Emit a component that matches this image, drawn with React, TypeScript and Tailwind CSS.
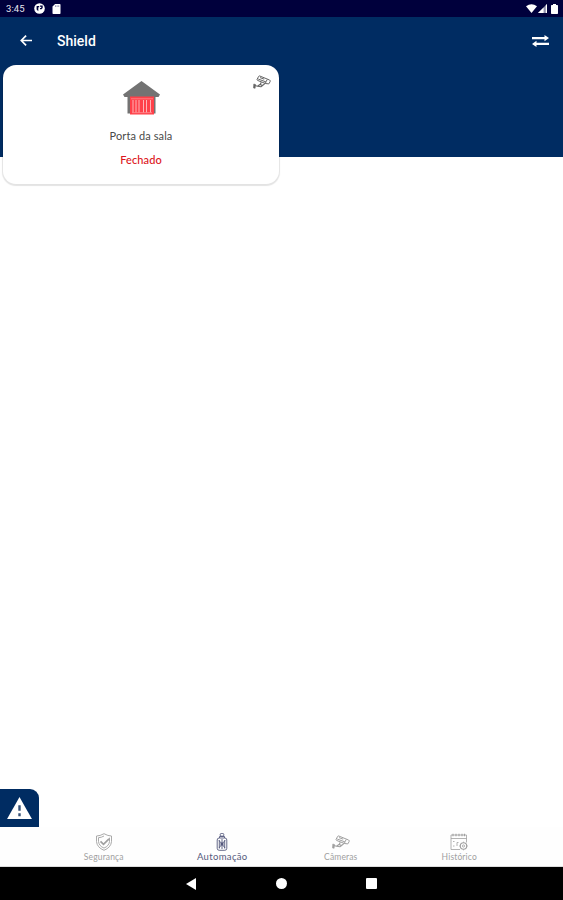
import { ReactNode } from 'react';

function StatusBar() {
  return (
    <div className="flex h-[17px] items-center justify-between bg-[#00003c] pl-[6px] pr-[5px] text-white">
      <div className="flex items-center">
        <span className="w-[28px] font-['Roboto',sans-serif] text-[9.5px] leading-none tracking-[0.1px] text-[#e4e4ec]">3:45</span>
        <svg className="h-[11px] w-[11px]" viewBox="0 0 11 11">
          <circle cx="5.5" cy="5.5" r="5.3" fill="#fff" />
          <path d="M2.600 3h2.600v1.300H4.300v4L2.600 6.500zM6 2.500h2.700v2.600L7.500 6.300H6V5h1.200V3.700H6z" fill="#00003c" />
        </svg>
        <svg className="ml-[7px] h-[10px] w-[9px]" viewBox="0 0 8 10">
          <path d="M2.6 0H7.3q.7 0 .7.7v8.6q0 .7-.7.7H.7Q0 10 0 9.300V2.600z" fill="#fff" />
          <path d="M3 1.300v1.700M4.600 1.300v1.700M6.200 1.300v1.700" stroke="#77779a" strokeWidth=".7" />
        </svg>
      </div>
      <div className="flex items-center">
        <svg className="h-[9px] w-[11px]" viewBox="0 0 11 9">
          <path d="M0 2.200Q5.500-1.600 11 2.200L5.500 9z" fill="#fff" />
        </svg>
        <svg className="ml-px h-[9px] w-[9px]" viewBox="0 0 9 9">
          <path d="M0 9L9 0v9z" fill="#8f8faa" />
          <path d="M0 9l5.600-5.600V9zM7.800 1.200L9 0v9H7.800z" fill="#fff" />
        </svg>
        <svg className="ml-[4px] h-[10px] w-[7px]" viewBox="0 0 7 10">
          <path d="M2 0h3v1h1.300q.7 0 .7.700v7.600q0 .7-.7.700H.7Q0 10 0 9.300V1.700Q0 1 .7 1H2z" fill="#fff" />
        </svg>
      </div>
    </div>
  );
}

function Header() {
  return (
    <header className="h-[140px] bg-[#002c62]">
      <div className="flex h-[47px] items-center pl-[20px] pr-[14px] text-white">
        <svg className="h-[11px] w-[12px]" viewBox="0 0 12 11" fill="none" stroke="#fff" strokeWidth="1.7">
          <path d="M12 5.500H1.200M6.100.700L1.300 5.500l4.800 4.800" />
        </svg>
        <h1 className="ml-[25px] font-['Roboto',sans-serif] text-[14px] leading-none font-medium">Shield</h1>
        <svg className="ml-auto h-[12px] w-[17px]" viewBox="0 0 17 12" fill="#fff">
          <path d="M0 1.900h12.500V0L17 3.100l-4.500 3.100V4.300H0zM17 7.700H4.500V5.800L0 8.900 4.500 12v-1.900H17z" />
        </svg>
      </div>
    </header>
  );
}

function CameraIcon() {
  return (
    <svg className="h-[14px] w-[18px]" viewBox="0 0 18 14" fill="none" stroke="currentColor" strokeLinejoin="round">
      <path d="M6.500.900L16.600 5q1 .6.500 1.700l-1.300 2.200-3.300-.4-8-3.100q-.8-.4-.3-1.300l1.200-2.200q.4-1 1.100-1z" strokeWidth="1" />
      <path d="M5.200 4l7.700 2.900 1.400-2.500M12.900 6.900l-.4 1.600M7 2.600l4.200 1.600" strokeWidth="1" />
      <path d="M8.300 7.200L7.200 9.500l2.300 1 2.700-2.100M7.300 9.300l-2.800 2-2.700-.8M4.500 11.300l3.400.4 2-1.500" strokeWidth="1.100" />
      <path d="M.8 9l1.700.5-.4 3.800-1.600-.4z" fill="currentColor" strokeWidth=".6" />
    </svg>
  );
}

function GarageIcon() {
  return (
    <svg className="h-[34px] w-[37px]" viewBox="0 0 37 34">
      <path d="M18.500 0L37 13.500 35.500 16H32.500V32.500H4.500V16H1.500L0 13.500z" fill="#737373" />
      <rect x="7" y="15.500" width="24" height="18" fill="#ff4049" />
      <path d="M8 17.800h22" stroke="#ff8b90" strokeWidth=".8" />
      <path d="M10 19v12.500M13 19v12.500M16 19v12.500M20.500 19v12.500M23.500 19v12.500M27.500 19v12.500" stroke="#ffb1b5" strokeWidth="1" />
      <path d="M9 31.700h20" stroke="#ff9297" strokeWidth=".8" />
    </svg>
  );
}

function DeviceCard({ name, status }: { name: string; status: string }) {
  return (
    <div className="relative -mt-[92px] ml-[3px] flex h-[119px] w-[276px] flex-col items-center rounded-[13px] bg-white pt-[16px] font-['Lato',sans-serif] shadow-[0_1px_1px_1px_#0000001c]">
      <div className="absolute top-[10px] right-[8px] text-[#666]">
        <CameraIcon />
      </div>
      <GarageIcon />
      <p className="mt-[13px] text-[11px] leading-[16px] tracking-[0.1px] text-[#4a4a4a]">{name}</p>
      <p className="mt-[8px] text-[11px] leading-[16px] font-medium tracking-[0.1px] text-[#dc1420]">{status}</p>
    </div>
  );
}

function ShieldIcon() {
  return (
    <svg className="h-[18px] w-[18px]" viewBox="0 0 18 18" fill="none" stroke="currentColor" strokeWidth=".9">
      <path d="M9 .700Q5 3 1.500 3v5.500Q2 14.500 9 17.300 16 14.500 16.500 8.500V3Q13 3 9 .700z" />
      <path d="M9 3Q6.500 4.500 3.500 4.700V8.500Q4 13 9 15.100 14 13 14.500 8.500V4.700" />
      <path d="M5.500 8.300L8.500 11.300 14 5.800" strokeWidth="1.700" />
    </svg>
  );
}

function RemoteIcon() {
  return (
    <svg className="h-[18px] w-[12px]" viewBox="0 0 12 18" fill="none" stroke="currentColor" strokeWidth=".9">
      <rect x="4.200" y=".500" width="3.600" height="2.600" rx="1" />
      <path d="M3.500 5V3.500h5V5" />
      <rect x="1.200" y="5" width="9.600" height="12.300" rx="2" />
      <path d="M6 6v10M3 7.500L6 11 9 7.500M3 15L6 11 9 15M3.300 7v8.500M8.700 7v8.500" />
      <circle cx="6" cy="11" r="1.200" fill="currentColor" />
    </svg>
  );
}

function HistoryIcon() {
  return (
    <svg className="h-[18px] w-[18px]" viewBox="0 0 18 18" fill="none" stroke="currentColor" strokeWidth=".8">
      <path d="M10 16.500H1V2h15.500v7.500M1 5.500h15.500" />
      <path d="M3 .700v2.600M6 .700v2.600M9 .700v2.600M12 .700v2.600M14.500 .700v2.600" strokeWidth="1.100" />
      <path d="M3 8.500h1.500M3 13h1.500M7 13V9.500h1.500" />
      <circle cx="13.500" cy="13" r="3.200" strokeWidth="1.100" />
      <circle cx="13.500" cy="13" r="1.100" />
      <path d="M13.500 8.700v1M13.500 16.300v1M9.200 13h1M16.800 13h1" />
    </svg>
  );
}

function Tab({ label, icon, active }: { label: string; icon: ReactNode; active?: boolean }) {
  return (
    <div className={`flex w-[118.5px] flex-col items-center ${active ? 'text-[#55597d]' : 'text-[#a0a0a0]'}`}>
      <div className="flex h-[18px] items-center">{icon}</div>
      <span className={active ? 'text-[9.5px] leading-[12px] tracking-[0.35px]' : 'text-[8.5px] leading-[12px] tracking-[0.15px]'}>{label}</span>
    </div>
  );
}

export default function App() {
  return (
    <div className="flex h-[900px] w-[563px] flex-col overflow-hidden bg-white">
      <StatusBar />
      <Header />
      <DeviceCard name="Porta da sala" status="Fechado" />

      <button className="mt-auto flex h-[38px] w-[39px] items-center justify-center rounded-tr-[9px] bg-[#002c62]">
        <svg className="h-[22px] w-[25px]" viewBox="0 0 26 23">
          <path d="M13 0L26 23H0z" fill="#fff" />
          <path d="M13 8.500v6M13 17v3" stroke="#344f76" strokeWidth="2.500" />
        </svg>
      </button>

      <nav className="flex h-[40px] justify-center border-b border-[#ddd] bg-[#fefefe] pt-[6px] font-['Lato',sans-serif]">
        <Tab label="Segurança" icon={<ShieldIcon />} />
        <Tab label="Automação" icon={<RemoteIcon />} active />
        <Tab label="Câmeras" icon={<CameraIcon />} />
        <Tab label="Histórico" icon={<HistoryIcon />} />
      </nav>

      <div className="flex h-[33px] items-center bg-black pl-[186px]">
        <svg className="h-[12px] w-[10px]" viewBox="0 0 10 12">
          <path d="M10 0v12L0 6z" fill="#fff" />
        </svg>
        <span className="ml-[80px] h-[11px] w-[11px] rounded-full bg-white" />
        <span className="ml-[79px] h-[11px] w-[11px] rounded-[1px] bg-white" />
      </div>
    </div>
  );
}
